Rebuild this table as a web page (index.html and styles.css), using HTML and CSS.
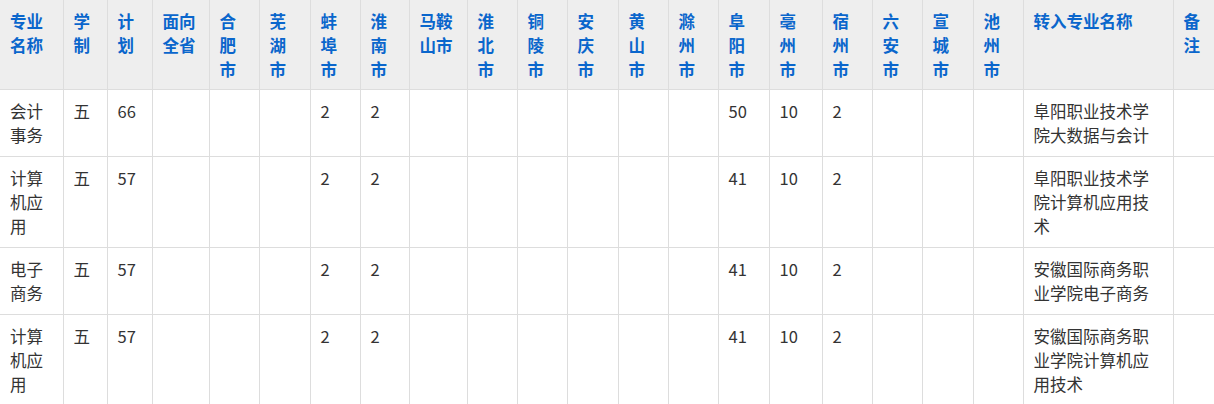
FILE: index.html
```html
<!DOCTYPE html>
<html lang="zh-CN">
<head>
<meta charset="utf-8">
<title>转段计划</title>
<link rel="stylesheet" href="styles.css">
</head>
<body>
<div class="wrap">
<table class="plan">
<colgroup>
<col class="w63"><col class="w44"><col class="w45"><col class="w57">
<col class="w50"><col class="w51"><col class="w50"><col class="w49">
<col class="w58"><col class="w50"><col class="w50"><col class="w51">
<col class="w50"><col class="w50"><col class="w51"><col class="w53">
<col class="w50"><col class="w50"><col class="w51"><col class="w50">
<col class="w150"><col class="w50">
</colgroup>
<thead>
<tr>
<th>专业名称</th><th>学制</th><th>计划</th><th>面向全省</th>
<th>合肥市</th><th>芜湖市</th><th>蚌埠市</th><th>淮南市</th>
<th>马鞍山市</th><th>淮北市</th><th>铜陵市</th><th>安庆市</th>
<th>黄山市</th><th>滁州市</th><th>阜阳市</th><th>亳州市</th>
<th>宿州市</th><th>六安市</th><th>宣城市</th><th>池州市</th>
<th>转入专业名称</th><th>备注</th>
</tr>
</thead>
<tbody>
<tr>
<td>会计事务</td><td>五</td><td>66</td><td></td>
<td></td><td></td><td>2</td><td>2</td>
<td></td><td></td><td></td><td></td>
<td></td><td></td><td>50</td><td>10</td>
<td>2</td><td></td><td></td><td></td>
<td>阜阳职业技术学院大数据与会计</td><td></td>
</tr>
<tr>
<td>计算机应用</td><td>五</td><td>57</td><td></td>
<td></td><td></td><td>2</td><td>2</td>
<td></td><td></td><td></td><td></td>
<td></td><td></td><td>41</td><td>10</td>
<td>2</td><td></td><td></td><td></td>
<td>阜阳职业技术学院计算机应用技术</td><td></td>
</tr>
<tr>
<td>电子商务</td><td>五</td><td>57</td><td></td>
<td></td><td></td><td>2</td><td>2</td>
<td></td><td></td><td></td><td></td>
<td></td><td></td><td>41</td><td>10</td>
<td>2</td><td></td><td></td><td></td>
<td>安徽国际商务职业学院电子商务</td><td></td>
</tr>
<tr>
<td>计算机应用</td><td>五</td><td>57</td><td></td>
<td></td><td></td><td>2</td><td>2</td>
<td></td><td></td><td></td><td></td>
<td></td><td></td><td>41</td><td>10</td>
<td>2</td><td></td><td></td><td></td>
<td>安徽国际商务职业学院计算机应用技术</td><td></td>
</tr>
</tbody>
</table>
</div>
</body>
</html>
```

FILE: styles.css
```css
html, body {
  margin: 0;
  padding: 0;
  background: #fff;
}

.wrap {
  width: 1214px;
  overflow: hidden;
}

.plan {
  table-layout: fixed;
  border-collapse: collapse;
  width: 1223px;
  font-family: "Noto Sans CJK SC", "Noto Sans", sans-serif;
  font-size: 16.5px;
  line-height: 24px;
  color: #333;
}

.plan th,
.plan td {
  border: 1px solid #dddddd;
  padding: 9px 10px 9px 10px;
  text-align: left;
  vertical-align: top;
  word-break: break-all;
}

.plan th {
  padding-bottom: 8px;
  background: #eeeeee;
  color: #0a66cc;
  font-weight: bold;
}

.plan thead th {
  border-top: 0;
}

.plan tr > :first-child {
  border-left: 0;
}

.w44 { width: 44px; }
.w45 { width: 45px; }
.w49 { width: 49px; }
.w50 { width: 50px; }
.w51 { width: 51px; }
.w53 { width: 53px; }
.w57 { width: 57px; }
.w58 { width: 58px; }
.w63 { width: 63px; }
.w150 { width: 150px; }
```
